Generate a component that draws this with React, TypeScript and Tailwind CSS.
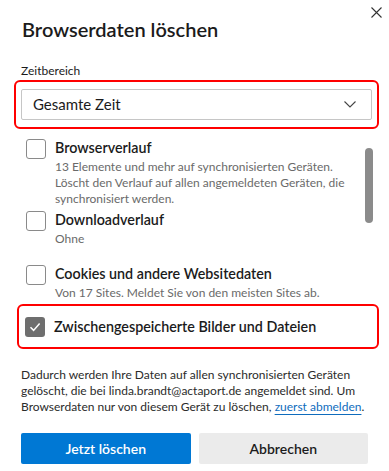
import React from "react";

const font = { fontFamily: 'Lato, "Open Sans", sans-serif' };

function Box({ checked = false }: { checked?: boolean }) {
  if (checked) {
    return (
      <div className="w-[20px] h-[20px] rounded-[3px] bg-[#6e6e6e] flex items-center justify-center shrink-0">
        <svg width="14" height="14" viewBox="0 0 14 14">
          <path d="M2.5 7.3 L5.6 10.4 L11.6 3.6" fill="none" stroke="white" strokeWidth="1.5" />
        </svg>
      </div>
    );
  }
  return <div className="w-[20px] h-[20px] rounded-[3px] border border-[#8a8a8a] bg-white shrink-0" />;
}

function Item({
  title,
  sub,
  className,
}: {
  title: string;
  sub?: string;
  className?: string;
}) {
  return (
    <div className={"flex items-start gap-[9px] pl-[26px] pr-[30px] " + (className ?? "")}>
      <Box />
      <div className="flex flex-col">
        <div className="text-[14.3px] leading-[16px] mt-[1px] font-semibold text-[#1b1b1b]">{title}</div>
        {sub && <div className="text-[12px] leading-[16px] text-[#6a6a6a] mt-[3px]">{sub}</div>}
      </div>
    </div>
  );
}

export default function App() {
  return (
    <div className="w-[389px] h-[471px] bg-white relative overflow-hidden" style={font}>
      <button className="absolute left-[371px] top-[7px] w-[11px] h-[11px]">
        <svg width="11" height="11" viewBox="0 0 11 11" className="block">
          <path d="M0.5 0.5 L10.5 10.5 M10.5 0.5 L0.5 10.5" stroke="#333" strokeWidth="1.1" />
        </svg>
      </button>
      <div className="pl-[22px] pt-[17px] text-[20px] leading-[24px] font-semibold text-[#1b1b1b]">
        Browserdaten löschen
      </div>
      <div className="pl-[21px] mt-[22px] text-[12px] leading-[16px] text-[#1b1b1b]">Zeitbereich</div>
      <div className="ml-[14px] mt-[1px] w-[365px] h-[49px] border-2 border-[#ff0000] rounded-[6px] px-[5px] py-[7px]">
        <div className="h-[31px] border border-[#c6c6c6] rounded-[2px] flex items-center justify-between pl-[11px] pr-[15px]">
          <span className="text-[15px] text-[#1b1b1b]">Gesamte Zeit</span>
          <svg width="12" height="7" viewBox="0 0 12 7" className="block">
            <path d="M0.5 0.5 L6 6 L11.5 0.5" fill="none" stroke="#444" strokeWidth="1.1" />
          </svg>
        </div>
      </div>

      <div className="relative h-[220px]">
        <div className="absolute left-[365px] top-[9px] w-[8px] h-[75px] rounded-full bg-[#8b8b8b]" />
        <Item
          className="mt-[10px]"
          title="Browserverlauf"
          sub="13 Elemente und mehr auf synchronisierten Geräten. Löscht den Verlauf auf allen angemeldeten Geräten, die synchronisiert werden."
        />
        <Item className="mt-[4px]" title="Downloadverlauf" sub="Ohne" />
        <Item
          className="mt-[18px]"
          title="Cookies und andere Websitedaten"
          sub="Von 17 Sites. Meldet Sie von den meisten Sites ab."
        />
        <div className="ml-[17px] mt-[3px] w-[362px] h-[45px] border-2 border-[#ff0000] rounded-[6px] flex items-center gap-[9px] pl-[6px]">
          <Box checked />
          <span className="text-[14.3px] leading-[20px] font-semibold text-[#1b1b1b]">
            Zwischengespeicherte Bilder und Dateien
          </span>
        </div>
      </div>

      <p className="pl-[21px] pr-[16px] mt-[8px] text-[12px] leading-[16px] text-[#2b2b2b]">
        Dadurch werden Ihre Daten auf allen synchronisierten Geräten gelöscht, die bei linda.brandt@actaport.de
        angemeldet sind. Um Browserdaten nur von diesem Gerät zu löschen,{" "}
        <a className="whitespace-nowrap text-[#0f6cbd] underline underline-offset-[3px] decoration-[#0f6cbd]">
          zuerst abmelden
        </a>
        .
      </p>

      <div className="flex gap-[8px] px-[21px] mt-[18px]">
        <button className="w-[172px] h-[31px] bg-[#0078d4] text-white text-[14px] font-semibold rounded-[2px]">
          Jetzt löschen
        </button>
        <button className="w-[172px] h-[31px] bg-[#ebebeb] text-[#1b1b1b] text-[14px] font-semibold rounded-[2px]">
          Abbrechen
        </button>
      </div>
    </div>
  );
}
